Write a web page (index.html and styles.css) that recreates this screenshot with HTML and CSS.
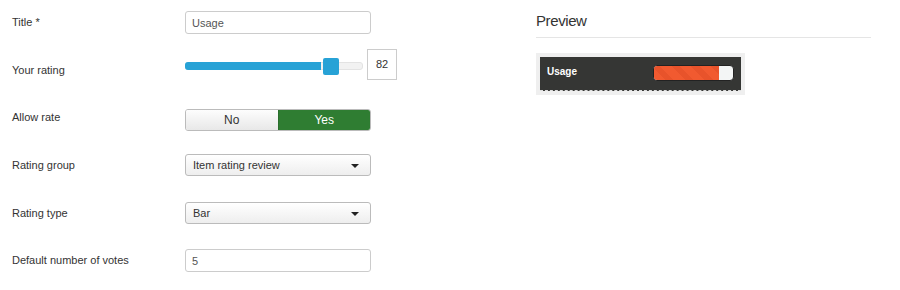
FILE: index.html
```html
<!DOCTYPE html>
<html lang="en">
<head>
    <meta charset="UTF-8">
    <title>Rating field</title>
    <link rel="stylesheet" href="styles.css">
</head>
<body>
    <div class="page">
        <form class="form">
            <label class="label">Title *</label>
            <input class="text-input" type="text" value="Usage">

            <label class="label label-rating">Your rating</label>
            <div class="rating-control">
                <div class="slider">
                    <div class="slider-fill" style="width: 77%"></div>
                    <div class="slider-thumb"></div>
                </div>
                <div class="slider-value">82</div>
            </div>

            <label class="label label-toggle">Allow rate</label>
            <div class="toggle">
                <span class="toggle-option">No</span>
                <span class="toggle-option active">Yes</span>
            </div>

            <label class="label">Rating group</label>
            <div class="select">
                <span>Item rating review</span>
                <span class="caret"></span>
            </div>

            <label class="label">Rating type</label>
            <div class="select">
                <span>Bar</span>
                <span class="caret"></span>
            </div>

            <label class="label">Default number of votes</label>
            <input class="text-input" type="text" value="5">
        </form>

        <div class="preview">
            <h2>Preview</h2>
            <div class="preview-box">
                <div class="rating-item">
                    <span class="rating-name">Usage</span>
                    <div class="bar">
                        <div class="bar-fill" style="width: 82%"></div>
                    </div>
                </div>
            </div>
        </div>
    </div>
</body>
</html>
```

FILE: styles.css
```css
* {
  margin: 0;
  padding: 0;
  box-sizing: border-box;
}
body {
  background: #fff;
  font-family: "Liberation Sans", Arial, sans-serif;
  font-size: 11px;
  color: #333;
}
.page {
  display: flex;
}

/* form */
.form {
  width: 536px;
  display: grid;
  grid-template-columns: 173px auto;
  grid-template-rows: 38px 60px 45px 48px 47px 23px;
  padding: 11px 0 0 12px;
  align-items: start;
}
.label {
  line-height: 23px;
  color: #333;
}
.label-rating {
  padding-top: 10px;
}
.label-toggle {
  line-height: 16px;
}
.text-input {
  width: 186px;
  height: 23px;
  border: 1px solid #ccc;
  border-radius: 3px;
  padding: 0 6px;
  font-family: inherit;
  font-size: 11px;
  color: #555;
  background: #fff;
  outline: none;
}

/* slider */
.rating-control {
  display: flex;
  align-items: center;
}
.slider {
  position: relative;
  width: 178px;
  height: 8px;
  margin-top: 3px;
  background: #f2f2f2;
  border: 1px solid #e3e3e3;
  border-radius: 3px;
}
.slider-fill {
  height: 8px;
  margin: -1px 0 0 -1px;
  background: #27a2d6;
  border-radius: 3px 0 0 3px;
}
.slider-thumb {
  position: absolute;
  left: 137px;
  top: -5px;
  width: 16px;
  height: 17px;
  background: #27a2d6;
  border-radius: 2px;
}
.slider-value {
  width: 30px;
  height: 31px;
  margin-left: 4px;
  border: 1px solid #ccc;
  line-height: 29px;
  text-align: center;
  color: #333;
}

/* yes / no switch */
.toggle {
  display: flex;
  width: 186px;
  height: 22px;
  border: 1px solid #bbb;
  border-radius: 3px;
  overflow: hidden;
  font-size: 12px;
}
.toggle-option {
  flex: 1;
  text-align: center;
  line-height: 20px;
  background: linear-gradient(#fdfdfd, #e8e8e8);
  color: #333;
}
.toggle-option.active {
  background: #2f7d32;
  color: #fff;
  border-left: 1px solid #2a6e2d;
}

/* select */
.select {
  display: flex;
  justify-content: space-between;
  align-items: center;
  width: 186px;
  height: 22px;
  padding: 0 11px 0 7px;
  border: 1px solid #bbb;
  border-radius: 3px;
  background: linear-gradient(#fff, #eee);
  color: #333;
}
.caret {
  width: 0;
  height: 0;
  margin-top: 2px;
  border-left: 4px solid transparent;
  border-right: 4px solid transparent;
  border-top: 4px solid #222;
}

/* preview */
.preview {
  width: 335px;
  padding-top: 10px;
}
.preview h2 {
  font-size: 15px;
  letter-spacing: -0.4px;
  font-weight: normal;
  line-height: 22px;
  padding-bottom: 5px;
  border-bottom: 1px solid #e5e5e5;
  color: #333;
}
.preview-box {
  width: 209px;
  margin-top: 15px;
  padding: 4px;
  background: #efefef;
}
.rating-item {
  display: flex;
  justify-content: space-between;
  align-items: center;
  height: 34px;
  padding: 0 7px 1px 7px;
  background: #353634;
  border-bottom: 1px dashed #ddd;
}
.rating-name {
  color: #fff;
  font-weight: bold;
  font-size: 10px;
  margin-bottom: 3px;
}
.bar {
  width: 81px;
  height: 16px;
  background: #f3f5f5;
  border: 1px solid #222;
  border-radius: 4px;
  overflow: hidden;
}
.bar-fill {
  height: 100%;
  background: repeating-linear-gradient(45deg, #f15a30 0 8px, #e8532b 8px 14px);
}
```
